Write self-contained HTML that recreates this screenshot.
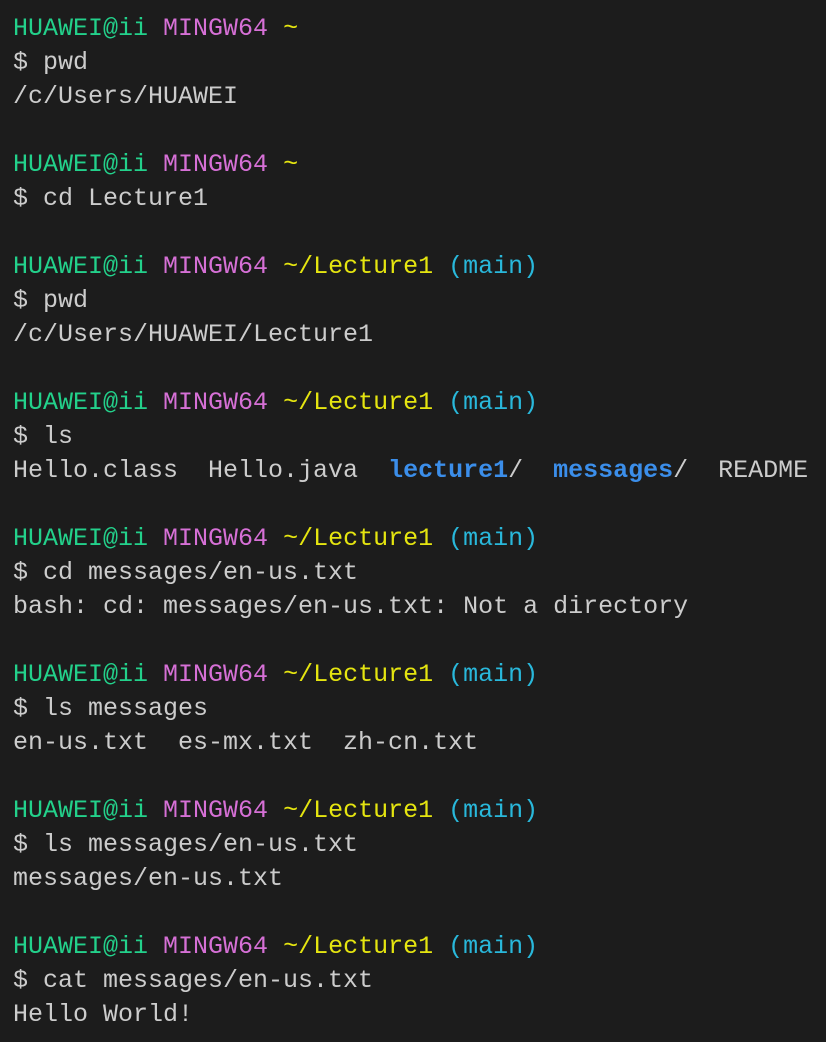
<!DOCTYPE html><html><head><style>
html,body{margin:0;background:#1c1c1c;width:826px;height:1042px;overflow:hidden}
pre{margin:0;position:absolute;left:13px;top:12px;font-family:"Liberation Mono",monospace;font-size:25px;line-height:34px;color:#cccccc}
.g{color:#23d18b}.m{color:#d670d6}.y{color:#e5e510}.c{color:#29b8db}.b{color:#3b8eea;font-weight:bold}
</style></head><body><pre><span class="g">HUAWEI@ii</span> <span class="m">MINGW64</span> <span class="y">~</span>
$ pwd
/c/Users/HUAWEI

<span class="g">HUAWEI@ii</span> <span class="m">MINGW64</span> <span class="y">~</span>
$ cd Lecture1

<span class="g">HUAWEI@ii</span> <span class="m">MINGW64</span> <span class="y">~/Lecture1</span> <span class="c">(main)</span>
$ pwd
/c/Users/HUAWEI/Lecture1

<span class="g">HUAWEI@ii</span> <span class="m">MINGW64</span> <span class="y">~/Lecture1</span> <span class="c">(main)</span>
$ ls
Hello.class  Hello.java  <span class="b">lecture1</span>/  <span class="b">messages</span>/  README

<span class="g">HUAWEI@ii</span> <span class="m">MINGW64</span> <span class="y">~/Lecture1</span> <span class="c">(main)</span>
$ cd messages/en-us.txt
bash: cd: messages/en-us.txt: Not a directory

<span class="g">HUAWEI@ii</span> <span class="m">MINGW64</span> <span class="y">~/Lecture1</span> <span class="c">(main)</span>
$ ls messages
en-us.txt  es-mx.txt  zh-cn.txt

<span class="g">HUAWEI@ii</span> <span class="m">MINGW64</span> <span class="y">~/Lecture1</span> <span class="c">(main)</span>
$ ls messages/en-us.txt
messages/en-us.txt

<span class="g">HUAWEI@ii</span> <span class="m">MINGW64</span> <span class="y">~/Lecture1</span> <span class="c">(main)</span>
$ cat messages/en-us.txt
Hello World!</pre></body></html>
